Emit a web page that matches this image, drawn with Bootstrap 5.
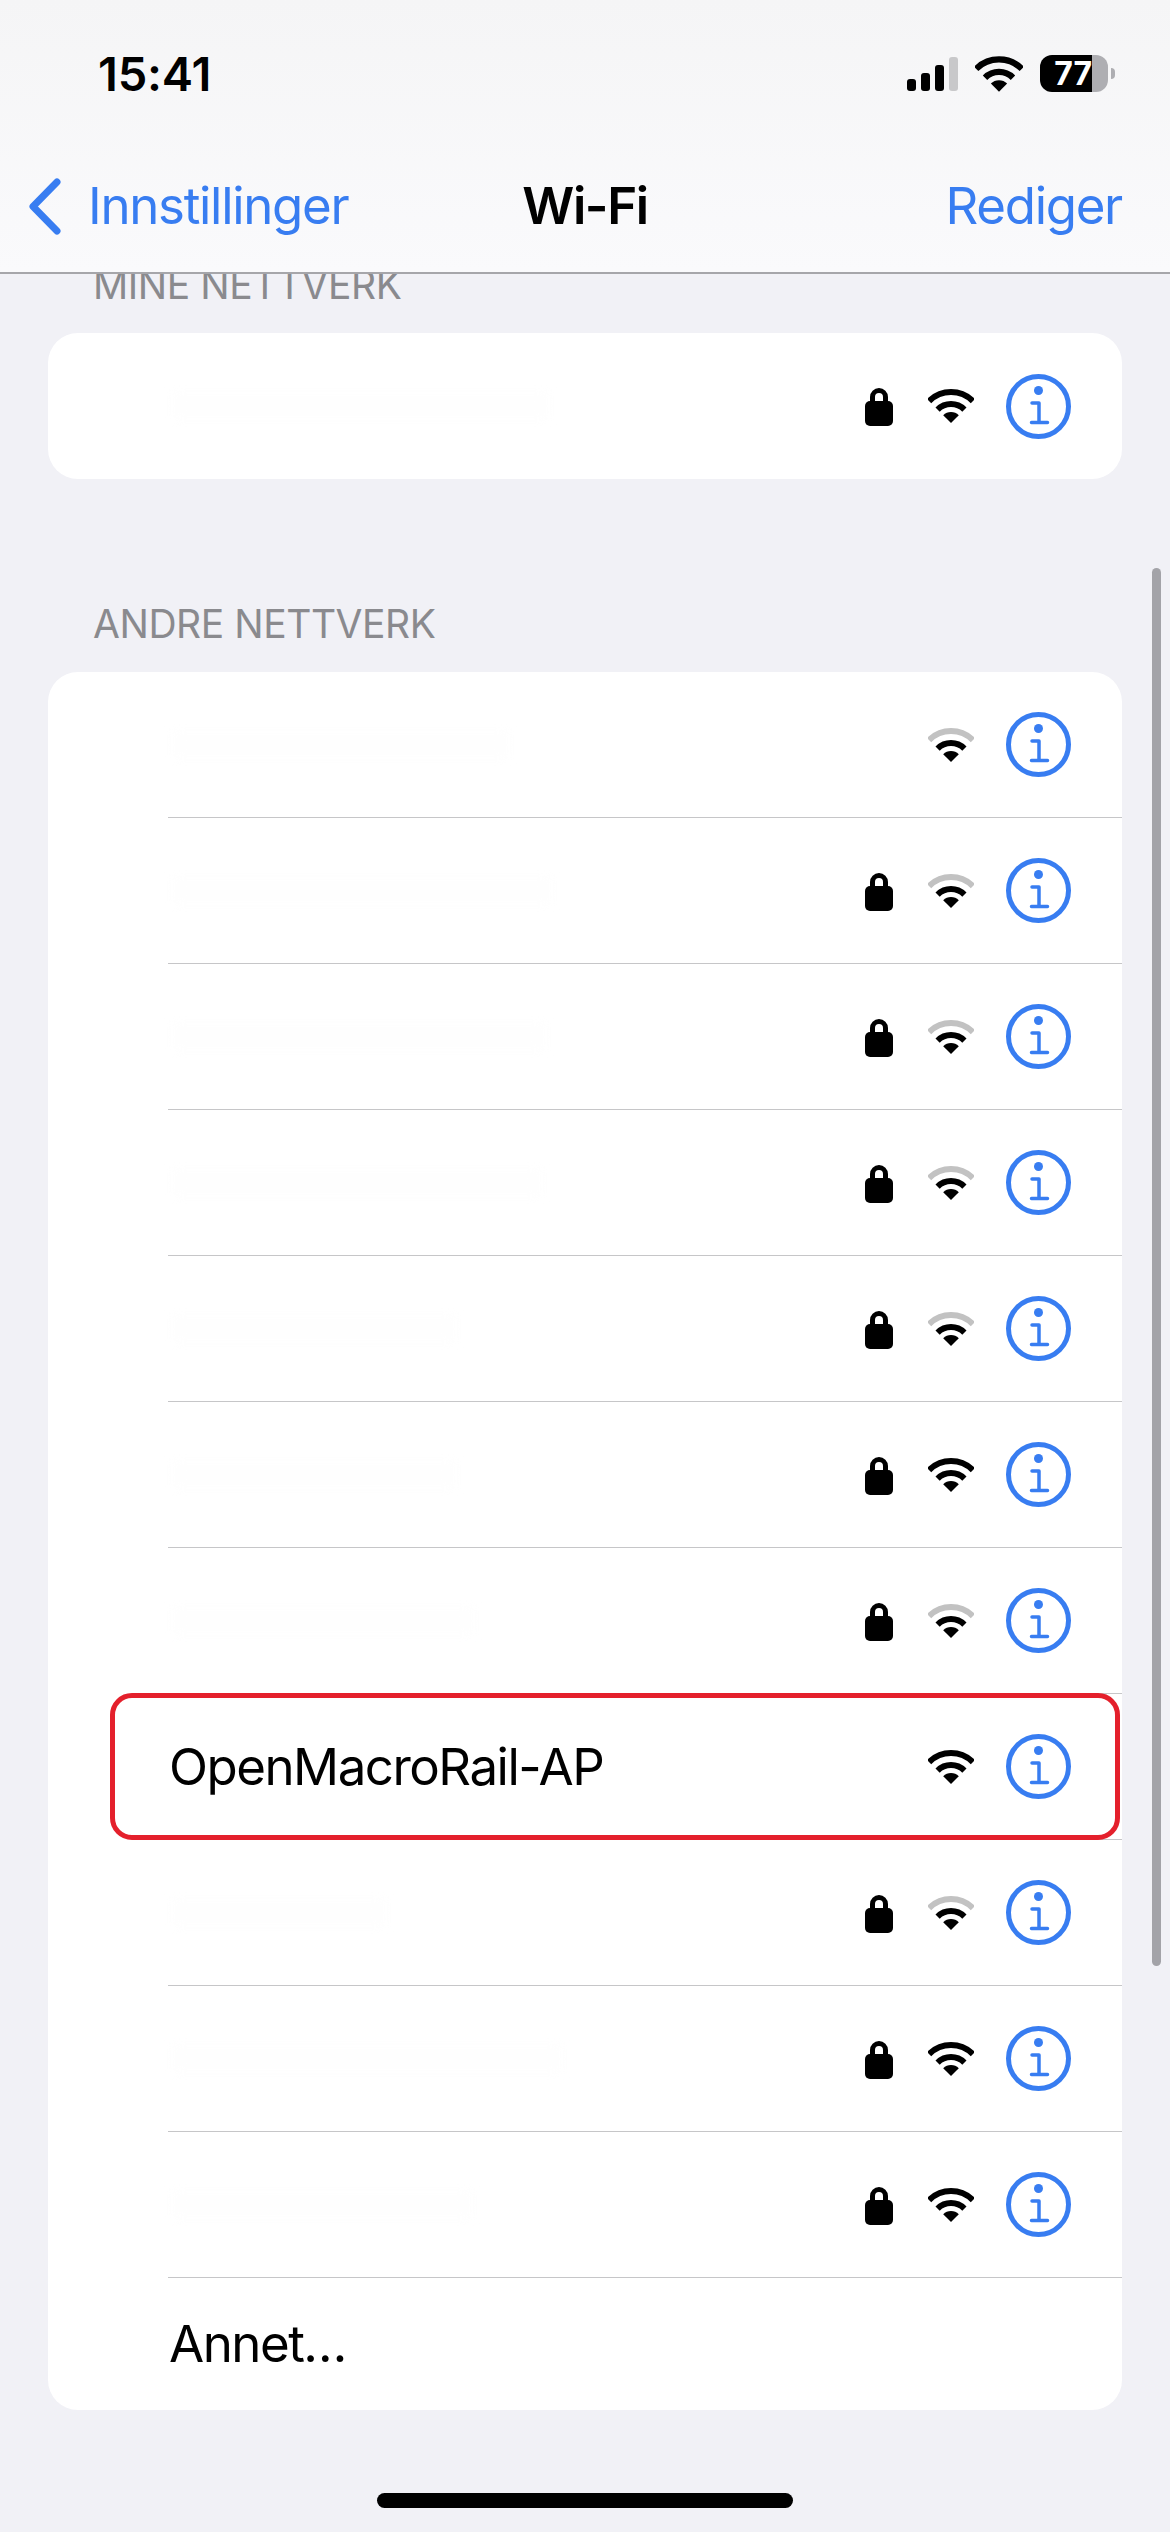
<!DOCTYPE html>
<html lang="nb">
<head>
<meta charset="utf-8">
<title>Wi-Fi</title>
<link rel="stylesheet" href="https://cdn.jsdelivr.net/npm/bootstrap@5.3.0/dist/css/bootstrap.min.css">
<style>
:root{--ios-blue:#387df1;--ios-bg:#f1f1f6;--ios-sep:#c6c6c8;}
html,body{margin:0;background:var(--ios-bg);}
body{font-family:Inter,"Liberation Sans",sans-serif;color:#000;}
.phone{width:1170px;height:2532px;overflow:hidden;position:relative;background:var(--ios-bg);}
.top-bar{height:274px;padding-top:55px;background:linear-gradient(180deg,#f5f5f6 0%,#fafafc 100%);border-bottom:2px solid #a6a6aa;}
.status-row{height:37px;padding:0 55px 0 98px;}
.clock{font-size:47px;line-height:37px;font-weight:600;letter-spacing:-.2px;}
.sig-wrap{gap:5px;height:34px;margin-right:17px;}
.sig-bar{width:9px;background:#000;border-radius:3px;}
.sig-off{background:#c8c8ca;}
.status-wifi{width:48px;height:36px;margin-right:17px;display:block;}
.batt{width:68px;height:37px;border-radius:12px;overflow:hidden;}
.batt-fill{width:52px;background:#000;color:#fff;font-size:32px;font-weight:700;line-height:37px;text-align:right;}
.batt-rest{flex:1;background:#aeaeb2;}
.batt-nub{width:4px;height:11px;margin-left:3px;background:#aeaeb2;border-radius:0 6px 6px 0;}
.nav-row{height:104px;margin-top:62px;padding:0 28px;}
.nav-side{flex:1 1 0;}
.nav-link-ios{font-size:51px;line-height:60px;color:var(--ios-blue);letter-spacing:-1.3px;text-decoration:none;}
.nav-edit{margin-right:20px;}
.back-chev{width:33px;height:57px;margin-right:27px;flex:none;}
.nav-title{font-size:51px;line-height:60px;font-weight:600;letter-spacing:-1.4px;}
.scroll-area{height:2258px;overflow:hidden;padding:0 48px;}
.sect-label{font-size:39px;line-height:48px;color:#8a8a8e;padding-left:45px;margin-bottom:24px;letter-spacing:-.45px;}
.sect-first{margin-top:-13px;}
.sect-card{border:0;border-radius:30px;margin-bottom:121px;overflow:visible;background:#fff;}
.net-list{background:transparent;border-radius:30px;}
.net-row{height:146px;margin-left:120px;padding:0 51px 0 1px;background:transparent;color:#000;border-width:0 0 2px 0;border-style:solid;border-color:var(--ios-sep);border-radius:0!important;font-size:51px;line-height:60px;}
.net-row:last-child{border-bottom:0;}
.net-last{height:132px;}
.net-name{letter-spacing:-1.5px;}
.ghost-name{height:28px;margin-left:2px;background:#fefefe;filter:blur(5px);border-radius:6px;}
.ico-lock{width:28px;height:40px;margin-right:35px;flex:none;}
.ico-wifi{width:46px;height:34px;margin-right:32px;flex:none;}
.ico-info{width:65px;height:65px;flex:none;}
.hilite{position:absolute;left:-58px;right:2px;top:-1px;bottom:-1px;border:5px solid #e4202c;border-radius:22px;pointer-events:none;}
.scroll-thumb{position:absolute;left:1152px;top:568px;width:9px;height:1398px;background:#a3a3a8;border-radius:5px;}
.home-bar{position:absolute;left:377px;top:2493px;width:416px;height:15px;background:#000;border-radius:8px;}
</style>
</head>
<body>
<svg width="0" height="0" class="position-absolute">
  <defs>
    <symbol id="i-lock" viewBox="0 0 28 40"><path d="M7.5 18V11a6.5 6.5 0 0 1 13 0v7" fill="none" stroke="#000" stroke-width="5"/><rect x="0" y="15" width="28" height="25" rx="5" fill="#000"/></symbol>
    <symbol id="i-info" viewBox="0 0 65 65"><circle cx="32.5" cy="32.5" r="30" fill="none" stroke="#387df1" stroke-width="5"/><circle cx="32.5" cy="16.5" r="4.5" fill="#387df1"/><path d="M26 29H33V48M25.5 48.5H41.500" fill="none" stroke="#387df1" stroke-width="3.500" stroke-linecap="round" stroke-linejoin="round"/></symbol>
    <symbol id="i-wifi-full" viewBox="0 0 46 34"><path d="M1.100 12.100A31 31 0 0 1 44.900 12.100" fill="none" stroke="#000" stroke-width="6"/><path d="M9.600 20.600A19 19 0 0 1 36.400 20.600" fill="none" stroke="#000" stroke-width="6"/><path d="M23 34 15.200 26.200A11 11 0 0 1 30.800 26.200Z" fill="#000"/></symbol>
    <symbol id="i-wifi-weak" viewBox="0 0 46 34"><path d="M1.100 12.100A31 31 0 0 1 44.900 12.100" fill="none" stroke="#c2c2c2" stroke-width="6"/><path d="M9.600 20.600A19 19 0 0 1 36.400 20.600" fill="none" stroke="#000" stroke-width="6"/><path d="M23 34 15.200 26.200A11 11 0 0 1 30.800 26.200Z" fill="#000"/></symbol>
  </defs>
</svg>
<div class="phone">
  <header class="top-bar">
    <div class="status-row d-flex justify-content-between align-items-center">
      <span class="clock">15:41</span>
      <div class="d-flex align-items-center">
        <div class="sig-wrap d-flex align-items-end">
          <div class="sig-bar" style="height:12px"></div>
          <div class="sig-bar" style="height:18px"></div>
          <div class="sig-bar" style="height:26px"></div>
          <div class="sig-bar sig-off" style="height:34px"></div>
        </div>
        <svg class="status-wifi"><use href="#i-wifi-full"/></svg>
        <div class="batt d-flex"><div class="batt-fill">77</div><div class="batt-rest"></div></div>
        <div class="batt-nub"></div>
      </div>
    </div>
    <nav class="nav-row d-flex align-items-center">
      <div class="nav-side d-flex align-items-center">
        <svg class="back-chev" viewBox="0 0 33 57"><path d="M29 4 5 28.500 29 53" fill="none" stroke="#387df1" stroke-width="7" stroke-linecap="round" stroke-linejoin="round"/></svg>
        <a class="nav-link-ios" href="#">Innstillinger</a>
      </div>
      <div class="nav-title">Wi-Fi</div>
      <div class="nav-side d-flex justify-content-end"><a class="nav-link-ios nav-edit" href="#">Rediger</a></div>
    </nav>
  </header>
  <main class="scroll-area">
    <div class="sect-label sect-first">MINE NETTVERK</div>
    <div class="card sect-card">
      <ul class="list-group list-group-flush net-list">
        <li class="list-group-item net-row d-flex align-items-center"><div class="flex-grow-1"><div class="ghost-name" style="width:379px"></div></div><svg class="ico-lock"><use href="#i-lock"/></svg><svg class="ico-wifi"><use href="#i-wifi-full"/></svg><svg class="ico-info"><use href="#i-info"/></svg></li>
      </ul>
    </div>
    <div class="sect-label">ANDRE NETTVERK</div>
    <div class="card sect-card">
      <ul class="list-group list-group-flush net-list">
        <li class="list-group-item net-row d-flex align-items-center"><div class="flex-grow-1"><div class="ghost-name" style="width:339px"></div></div><svg class="ico-wifi"><use href="#i-wifi-weak"/></svg><svg class="ico-info"><use href="#i-info"/></svg></li>
        <li class="list-group-item net-row d-flex align-items-center"><div class="flex-grow-1"><div class="ghost-name" style="width:382px"></div></div><svg class="ico-lock"><use href="#i-lock"/></svg><svg class="ico-wifi"><use href="#i-wifi-weak"/></svg><svg class="ico-info"><use href="#i-info"/></svg></li>
        <li class="list-group-item net-row d-flex align-items-center"><div class="flex-grow-1"><div class="ghost-name" style="width:376px"></div></div><svg class="ico-lock"><use href="#i-lock"/></svg><svg class="ico-wifi"><use href="#i-wifi-weak"/></svg><svg class="ico-info"><use href="#i-info"/></svg></li>
        <li class="list-group-item net-row d-flex align-items-center"><div class="flex-grow-1"><div class="ghost-name" style="width:372px"></div></div><svg class="ico-lock"><use href="#i-lock"/></svg><svg class="ico-wifi"><use href="#i-wifi-weak"/></svg><svg class="ico-info"><use href="#i-info"/></svg></li>
        <li class="list-group-item net-row d-flex align-items-center"><div class="flex-grow-1"><div class="ghost-name" style="width:286px"></div></div><svg class="ico-lock"><use href="#i-lock"/></svg><svg class="ico-wifi"><use href="#i-wifi-weak"/></svg><svg class="ico-info"><use href="#i-info"/></svg></li>
        <li class="list-group-item net-row d-flex align-items-center"><div class="flex-grow-1"><div class="ghost-name" style="width:286px"></div></div><svg class="ico-lock"><use href="#i-lock"/></svg><svg class="ico-wifi"><use href="#i-wifi-full"/></svg><svg class="ico-info"><use href="#i-info"/></svg></li>
        <li class="list-group-item net-row d-flex align-items-center"><div class="flex-grow-1"><div class="ghost-name" style="width:304px"></div></div><svg class="ico-lock"><use href="#i-lock"/></svg><svg class="ico-wifi"><use href="#i-wifi-weak"/></svg><svg class="ico-info"><use href="#i-info"/></svg></li>
        <li class="list-group-item net-row d-flex align-items-center"><div class="net-name flex-grow-1">OpenMacroRail-AP</div><svg class="ico-wifi"><use href="#i-wifi-full"/></svg><svg class="ico-info"><use href="#i-info"/></svg><div class="hilite"></div></li>
        <li class="list-group-item net-row d-flex align-items-center"><div class="flex-grow-1"><div class="ghost-name" style="width:216px"></div></div><svg class="ico-lock"><use href="#i-lock"/></svg><svg class="ico-wifi"><use href="#i-wifi-weak"/></svg><svg class="ico-info"><use href="#i-info"/></svg></li>
        <li class="list-group-item net-row d-flex align-items-center"><div class="flex-grow-1"><div class="ghost-name" style="width:392px"></div></div><svg class="ico-lock"><use href="#i-lock"/></svg><svg class="ico-wifi"><use href="#i-wifi-full"/></svg><svg class="ico-info"><use href="#i-info"/></svg></li>
        <li class="list-group-item net-row d-flex align-items-center"><div class="flex-grow-1"><div class="ghost-name" style="width:302px"></div></div><svg class="ico-lock"><use href="#i-lock"/></svg><svg class="ico-wifi"><use href="#i-wifi-full"/></svg><svg class="ico-info"><use href="#i-info"/></svg></li>
        <li class="list-group-item net-row net-last d-flex align-items-center"><div class="net-name">Annet…</div></li>
      </ul>
    </div>
  </main>
  <div class="scroll-thumb"></div>
  <div class="home-bar"></div>
</div>
<script src="https://cdn.jsdelivr.net/npm/bootstrap@5.3.0/dist/js/bootstrap.bundle.min.js"></script>
</body>
</html>
